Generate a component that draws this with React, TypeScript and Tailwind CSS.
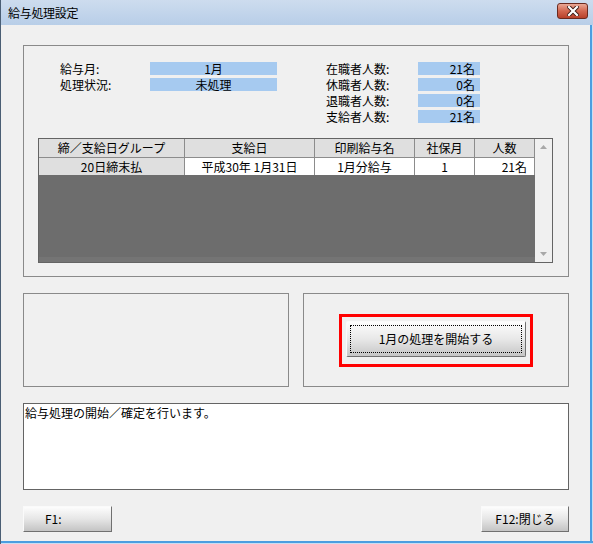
import { ReactNode } from 'react'

const leftInfo = [
  { label: '給与月:', value: '1月' },
  { label: '処理状況:', value: '未処理' },
]

const rightInfo = [
  { label: '在職者人数:', value: '21名' },
  { label: '休職者人数:', value: '0名' },
  { label: '退職者人数:', value: '0名' },
  { label: '支給者人数:', value: '21名' },
]

const columns = [
  { title: '締／支給日グループ', width: 'w-[146px]' },
  { title: '支給日', width: 'w-[130px]' },
  { title: '印刷給与名', width: 'w-[100px]' },
  { title: '社保月', width: 'w-[60px]' },
  { title: '人数', width: 'w-[60px]' },
]

function InfoRow({
  label,
  value,
  labelW,
  valueW,
  align,
}: {
  label: string
  value: string
  labelW: string
  valueW: string
  align: 'center' | 'right'
}) {
  return (
    <div className="flex h-[16px] items-start">
      <span className={`${labelW} h-[13px] leading-[13px]`}>{label}</span>
      <span
        className={`${valueW} h-[13px] bg-[#a6caf0] leading-[13px] ${
          align === 'center' ? 'text-center' : 'pr-[5px] text-right'
        }`}
      >
        {value}
      </span>
    </div>
  )
}

function GroupBox({ className, children }: { className: string; children?: ReactNode }) {
  return <div className={`border border-[#8a8a8a] ${className}`}>{children}</div>
}

function FnButton({ label, className }: { label: string; className: string }) {
  return (
    <button
      className={`h-[26px] border border-t-[#fafafa] border-l-[#fafafa] border-r-[#707070] border-b-[#707070] bg-linear-to-b from-[#fdfdfd] via-[#e6e6e6] to-[#c4c4c4] text-[12px] leading-[14px] text-black ${className}`}
    >
      {label}
    </button>
  )
}

function App() {
  return (
    <div className="flex h-[544px] w-[593px] flex-col border-l border-[#4a5e74] bg-[#b9d0ea] font-['Noto_Sans_CJK_JP',sans-serif] text-[12px] text-black">
      {/* title bar */}
      <div className="flex h-[25px] shrink-0 items-center justify-between bg-linear-to-b from-[#cddcee] to-[#b8cee8] pl-[7px] pr-[5px]">
        <span className="text-[12px] leading-[14px] tracking-[-0.3px]">給与処理設定</span>
        <div className="mb-[3px] flex h-[16px] w-[31px] items-center justify-center rounded-[3px] border border-[#6b2a1f] bg-linear-to-b from-[#e9a896] via-[#d2664f] to-[#b8402a]">
          <svg width="12" height="10" viewBox="0 0 12 10">
            <path d="M2 1 L10 9 M10 1 L2 9" stroke="#3a1a14" strokeWidth="4" strokeLinecap="square" />
            <path d="M2 1 L10 9 M10 1 L2 9" stroke="#ffffff" strokeWidth="2.2" strokeLinecap="square" />
          </svg>
        </div>
      </div>

      <div className="flex flex-1">
        {/* client area */}
        <div className="flex flex-1 flex-col bg-[#f0f0f0] pl-[22px] pt-[20px]">
          <GroupBox className="flex h-[232px] w-[546px] flex-col pl-[14px] pt-[16px]">
            <div className="flex">
              <div className="ml-[22px] flex flex-col">
                {leftInfo.map((r) => (
                  <InfoRow key={r.label} {...r} labelW="w-[90px]" valueW="w-[127px]" align="center" />
                ))}
              </div>
              <div className="ml-[49px] flex flex-col">
                {rightInfo.map((r) => (
                  <InfoRow key={r.label} {...r} labelW="w-[92px]" valueW="w-[62px]" align="right" />
                ))}
              </div>
            </div>

            {/* grid */}
            <div className="mt-[12px] flex h-[125px] w-[515px] border border-[#646464]">
              <div className="flex w-[496px] flex-col">
                <div className="flex h-[19px] border-b border-[#8c8c8c] bg-[#dfdfdf]">
                  {columns.map((c) => (
                    <div
                      key={c.title}
                      className={`${c.width} border-r border-[#8c8c8c] text-center leading-[18px]`}
                    >
                      {c.title}
                    </div>
                  ))}
                </div>
                <div className="flex h-[17px] leading-[17px]">
                  <div className="w-[146px] border-r border-[#8c8c8c] bg-[#dfdfdf] text-center">20日締末払</div>
                  <div className="w-[130px] border-r border-[#8c8c8c] bg-white text-center">平成30年 1月31日</div>
                  <div className="w-[100px] border-r border-[#8c8c8c] bg-white text-center">1月分給与</div>
                  <div className="w-[60px] border-r border-[#8c8c8c] bg-white text-center">1</div>
                  <div className="w-[60px] border-r border-[#8c8c8c] bg-white pr-[7px] text-right">21名</div>
                </div>
                <div className="flex flex-1 flex-col bg-[#6d6d6d]">
                  <div className="flex-1" />
                  <div className="h-[5px] bg-[#747474]" />
                </div>
              </div>
              <div className="flex w-[17px] flex-col items-center justify-between bg-[#f0f0f0] py-[6px]">
                <svg width="7" height="4" viewBox="0 0 7 4">
                  <path d="M0 4 L3.5 0 L7 4 Z" fill="#a8a8a8" />
                </svg>
                <svg width="7" height="4" viewBox="0 0 7 4">
                  <path d="M0 0 L3.5 4 L7 0 Z" fill="#a8a8a8" />
                </svg>
              </div>
            </div>
          </GroupBox>

          <div className="mt-[16px] flex gap-[14px]">
            <GroupBox className="h-[94px] w-[266px]" />
            <GroupBox className="flex h-[94px] w-[266px] items-center justify-center">
              <div className="border-[3px] border-[#ff0000] px-[4px] pb-[7px] pt-[4px]">
                <button className="relative h-[36px] w-[180px] rounded-[2px] border border-t-[#fafafa] border-l-[#fafafa] border-r-[#6f6f6f] border-b-[#6f6f6f] bg-linear-to-b from-[#fdfdfd] via-[#e8e8e8] to-[#c6c6c6] text-[12px] text-black">
                  <span className="absolute inset-[3px] border border-dotted border-black" />
                  1月の処理を開始する
                </button>
              </div>
            </GroupBox>
          </div>

          <div className="mt-[16px] h-[87px] w-[546px] border border-[#646464] bg-white px-[1px] pt-[2px] leading-[14px]">
            給与処理の開始／確定を行います。
          </div>

          <div className="mt-[16px] flex w-[546px] justify-between">
            <FnButton label="F1:" className="w-[89px] pl-[21px] text-left" />
            <FnButton label="F12:閉じる" className="w-[88px] text-center" />
          </div>
        </div>
        {/* right frame */}
        <div className="flex w-[5px]">
          <div className="w-[2px] bg-[#f0f0f0]" />
          <div className="w-[2px] bg-[#4c9ee0]" />
          <div className="w-[1px] bg-[#c9def2]" />
        </div>
      </div>
      {/* bottom frame */}
      <div className="flex h-[3px] flex-col">
        <div className="h-[2px] bg-[#4c9ee0]" />
        <div className="h-[1px] bg-[#c9def2]" />
      </div>
    </div>
  )
}

export default App
